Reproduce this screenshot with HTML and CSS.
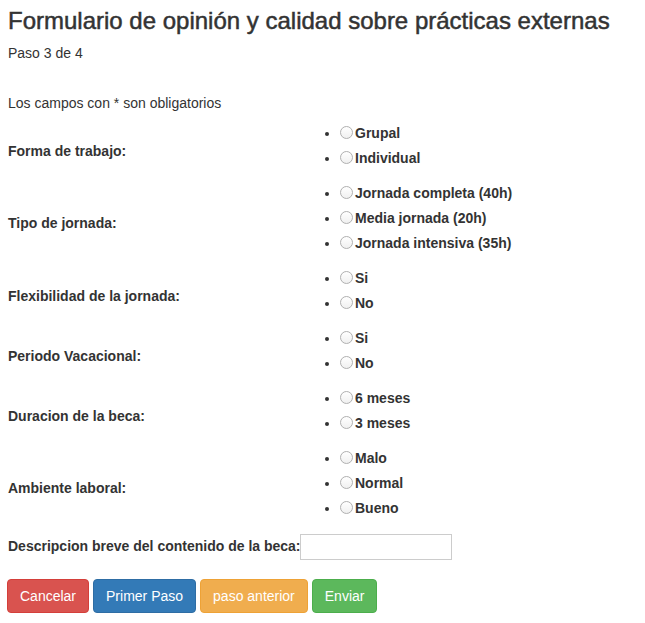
FILE: index.html
```html
<!DOCTYPE html>
<html lang="es">
<head>
<meta charset="utf-8">
<title>Formulario</title>
<link rel="stylesheet" href="styles.css">
</head>
<body>
<div class="page">
  <h1 class="title">Formulario de opinión y calidad sobre prácticas externas</h1>
  <p class="step">Paso 3 de 4</p>
  <p class="note">Los campos con * son obligatorios</p>
  <form class="form">
    <div class="row">
      <div class="label">Forma de trabajo:</div>
      <ul class="opts">
        <li><span class="radio"></span>Grupal</li>
        <li><span class="radio"></span>Individual</li>
      </ul>
    </div>
    <div class="row">
      <div class="label">Tipo de jornada:</div>
      <ul class="opts">
        <li><span class="radio"></span>Jornada completa (40h)</li>
        <li><span class="radio"></span>Media jornada (20h)</li>
        <li><span class="radio"></span>Jornada intensiva (35h)</li>
      </ul>
    </div>
    <div class="row">
      <div class="label">Flexibilidad de la jornada:</div>
      <ul class="opts">
        <li><span class="radio"></span>Si</li>
        <li><span class="radio"></span>No</li>
      </ul>
    </div>
    <div class="row">
      <div class="label">Periodo Vacacional:</div>
      <ul class="opts">
        <li><span class="radio"></span>Si</li>
        <li><span class="radio"></span>No</li>
      </ul>
    </div>
    <div class="row">
      <div class="label">Duracion de la beca:</div>
      <ul class="opts">
        <li><span class="radio"></span>6 meses</li>
        <li><span class="radio"></span>3 meses</li>
      </ul>
    </div>
    <div class="row">
      <div class="label">Ambiente laboral:</div>
      <ul class="opts">
        <li><span class="radio"></span>Malo</li>
        <li><span class="radio"></span>Normal</li>
        <li><span class="radio"></span>Bueno</li>
      </ul>
    </div>
    <div class="desc">
      <span class="label">Descripcion breve del contenido de la beca:</span>
      <span class="input"></span>
    </div>
    <div class="buttons">
      <span class="btn btn-danger">Cancelar</span>
      <span class="btn btn-primary">Primer Paso</span>
      <span class="btn btn-warning">paso anterior</span>
      <span class="btn btn-success">Enviar</span>
    </div>
  </form>
</div>
</body>
</html>
```
FILE: styles.css
```css
html, body {
  margin: 0;
  padding: 0;
  background: #fff;
}
body {
  font-family: "Liberation Sans", Arial, sans-serif;
  font-size: 14px;
  line-height: 20px;
  color: #333;
}
.page {
  padding: 8px;
}
.title {
  margin: 0;
  font-size: 24px;
  line-height: 26px;
  font-weight: 400;
  -webkit-text-stroke: 0.5px #333;
  color: #333;
}
.step {
  margin: 9px 0 0;
}
.note {
  margin: 30px 0 0;
}
.form {
  margin-top: 8px;
}
.row {
  display: grid;
  grid-template-columns: 292px 1fr;
  align-items: center;
}
.row > .label {
  margin-top: -1px;
}
.label {
  font-weight: 700;
}
.opts {
  margin: 0 0 10px;
  padding: 0 0 0 40px;
  font-weight: 700;
}
.opts li {
  height: 25px;
  line-height: 25px;
}
.radio {
  display: inline-block;
  width: 11px;
  height: 11px;
  border: 1px solid #b0b0b0;
  border-radius: 50%;
  background: linear-gradient(#fff, #f0f0f0);
  margin-right: 2px;
  vertical-align: -1px;
}
.desc {
  display: flex;
  align-items: center;
  height: 30px;
}
.input {
  display: block;
  width: 150px;
  height: 24px;
  border: 1px solid #ccc;
  margin-top: 2px;
  margin-left: -1px;
  background: #fff;
}
.buttons {
  display: flex;
  gap: 4px;
  margin-top: 18px;
  margin-left: -1px;
}
.btn {
  display: inline-block;
  padding: 6px 12px;
  border: 1px solid transparent;
  border-radius: 4px;
  color: #fff;
  font-size: 14px;
  line-height: 20px;
}
.btn-danger { background: #d9534f; border-color: #d43f3a; }
.btn-primary { background: #337ab7; border-color: #2e6da4; }
.btn-warning { background: #f0ad4e; border-color: #eea236; }
.btn-success { background: #5cb85c; border-color: #4cae4c; }
```
